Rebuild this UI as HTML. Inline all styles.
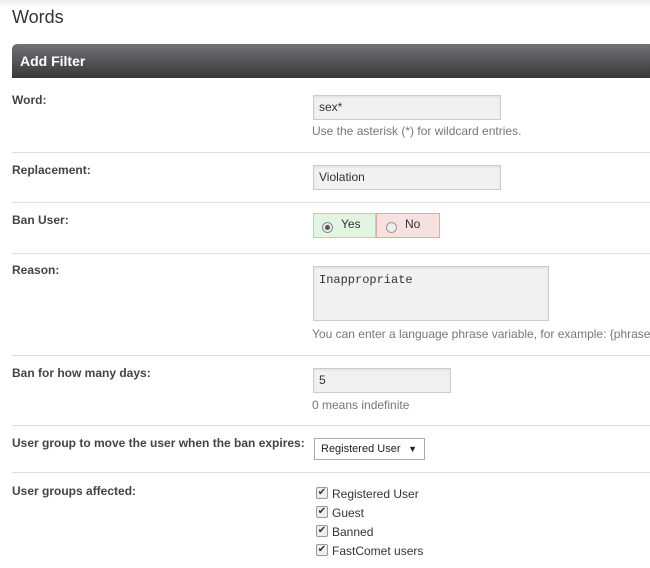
<!DOCTYPE html><html><head><style>
body{margin:0;width:650px;height:568px;overflow:hidden;background:#fff;font-family:"Liberation Sans",Arial,sans-serif;position:relative}
.a{position:absolute}
.lbl{position:absolute;left:12px;font-size:12px;font-weight:bold;color:#444}
.sep{position:absolute;left:12px;right:0;height:1px;background:#ddd}
.in{position:absolute;left:313px;background:#f1f1f1;border:1px solid #ccc;box-sizing:border-box;font-size:12px;color:#333;padding-left:5px;box-shadow:inset 0 1px 2px rgba(0,0,0,.08)}
.help{position:absolute;left:312px;font-size:12px;color:#777;white-space:nowrap}
.cb{position:absolute;left:316px;width:10px;height:10px;border:1px solid #999;border-radius:2px;background:#eee;font-size:10px;line-height:10px;text-align:center;color:#333}
.ct{position:absolute;left:332px;font-size:12px;color:#333}
</style></head><body>
<div class="a" style="left:0;top:0;width:650px;height:8px;background:linear-gradient(#eee,#fff)"></div>
<div class="a" style="left:12px;top:7px;font-size:18px;color:#333">Words</div>
<div class="a" style="left:12px;top:44px;width:638px;height:34px;border-radius:5px 0 0 0;background:linear-gradient(#727275,#38383a)"></div>
<div class="a" style="left:20px;top:53px;font-size:14px;font-weight:bold;color:#fff">Add Filter</div>

<div class="lbl" style="top:93px">Word:</div>
<div class="in" style="top:95px;width:188px;height:25px;line-height:23px">sex*</div>
<div class="help" style="top:124px">Use the asterisk (*) for wildcard entries.</div>
<div class="sep" style="top:152px"></div>

<div class="lbl" style="top:163px">Replacement:</div>
<div class="in" style="top:165px;width:188px;height:25px;line-height:23px">Violation</div>
<div class="sep" style="top:202px"></div>

<div class="lbl" style="top:213px">Ban User:</div>
<div class="a" style="left:313px;top:213px;width:63px;height:25px;box-sizing:border-box;border:1px solid #a8dca8;background:#e2f5e2"></div>
<div class="a" style="left:376px;top:213px;width:64px;height:25px;box-sizing:border-box;border:1px solid #e0a8a8;background:#f6e0e0"></div>
<div class="a" style="left:322px;top:222px;width:9px;height:9px;border:1px solid #888;border-radius:50%;background:#eee"></div>
<div class="a" style="left:325px;top:225px;width:5px;height:5px;border-radius:50%;background:#555"></div>
<div class="a" style="left:341px;top:217px;font-size:12px;color:#333">Yes</div>
<div class="a" style="left:386px;top:222px;width:9px;height:9px;border:1px solid #999;border-radius:50%;background:#eee"></div>
<div class="a" style="left:405px;top:217px;font-size:12px;color:#333">No</div>
<div class="sep" style="top:253px"></div>

<div class="lbl" style="top:263px">Reason:</div>
<div class="in" style="top:266px;width:236px;height:55px;font-family:'Liberation Mono',monospace;padding-top:6px;font-size:12px">Inappropriate</div>
<div class="help" style="top:327px">You can enter a language phrase variable, for example: {phrase</div>
<div class="sep" style="top:355px"></div>

<div class="lbl" style="top:366px">Ban for how many days:</div>
<div class="in" style="top:368px;width:138px;height:25px;line-height:23px">5</div>
<div class="help" style="top:398px">0 means indefinite</div>
<div class="sep" style="top:425px"></div>

<div class="lbl" style="top:436px">User group to move the user when the ban expires:</div>
<div class="a" style="left:314px;top:438px;width:111px;height:22px;box-sizing:border-box;border:1px solid #aaa;background:#fff;font-size:11px;color:#222;line-height:20px;padding-left:6px">Registered User<span style="position:absolute;right:7px;font-size:9px">▼</span></div>
<div class="sep" style="top:472px"></div>

<div class="lbl" style="top:484px">User groups affected:</div>
<div class="cb" style="top:487px">✔</div><div class="ct" style="top:487px">Registered User</div>
<div class="cb" style="top:506px">✔</div><div class="ct" style="top:506px">Guest</div>
<div class="cb" style="top:525px">✔</div><div class="ct" style="top:525px">Banned</div>
<div class="cb" style="top:544px">✔</div><div class="ct" style="top:544px">FastComet users</div>
</body></html>
